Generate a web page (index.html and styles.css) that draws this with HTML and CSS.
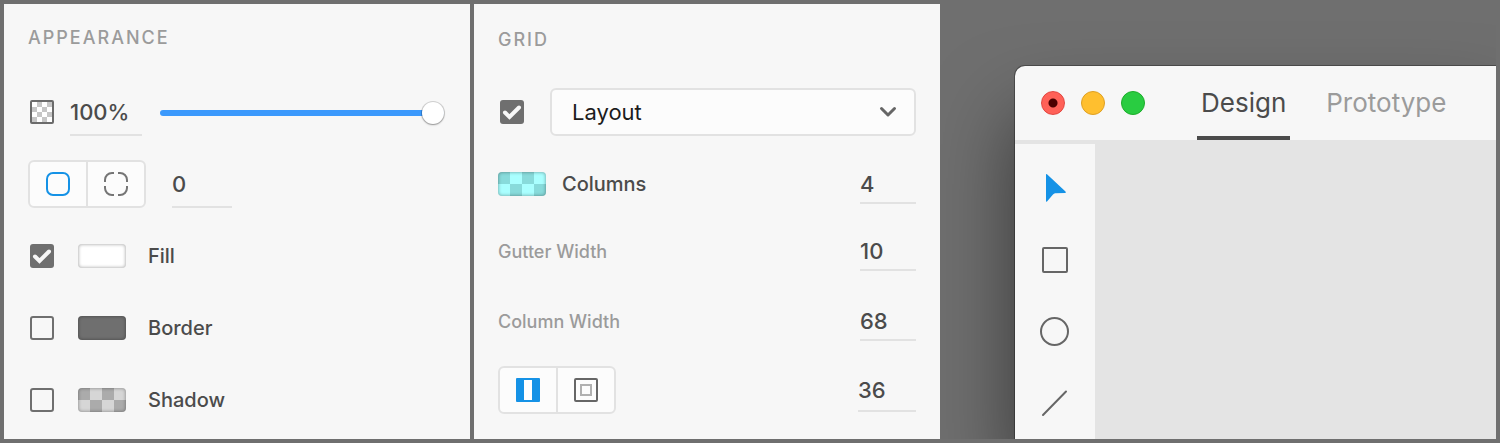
FILE: index.html
```html
<!DOCTYPE html>
<html lang="en">

<head>
    <meta charset="UTF-8">
    <meta name="viewport" content="width=device-width, initial-scale=1.0">
    <title>Design Tool Panels</title>
    <link rel="stylesheet" href="styles.css">
</head>

<body>
    <section class="panel">
        <h2>Appearance</h2>
        <div class="row">
            <svg class="opacity-icon" width="24" height="24" viewBox="0 0 24 24">
                <rect x="1" y="1" width="22" height="22" rx="1" fill="#fff" stroke="#6b6b6b" stroke-width="2" />
                <path fill="#c6c6c6" d="M7 2h5v5H7zM17 2h5v5h-5zM2 7h5v5H2zM12 7h5v5h-5zM7 12h5v5H7zM17 12h5v5h-5zM2 17h5v5H2zM12 17h5v5h-5z" />
            </svg>
            <input type="text" class="number opacity" value="100%" aria-label="Opacity">
            <input type="range" class="slider" min="0" max="100" value="100" aria-label="Opacity slider">
        </div>
        <div class="row">
            <div class="segment">
                <button type="button" aria-label="Same radius for all corners">
                    <svg width="24" height="24" viewBox="0 0 24 24" fill="none" stroke="#1592e6" stroke-width="2">
                        <rect x="1" y="1" width="22" height="22" rx="6" />
                    </svg>
                </button>
                <button type="button" aria-label="Different radius for each corner">
                    <svg width="24" height="24" viewBox="0 0 24 24" fill="none" stroke="#757575" stroke-width="2">
                        <path d="M1 10V8a7 7 0 0 1 7-7h2M14 1h2a7 7 0 0 1 7 7v2M23 14v2a7 7 0 0 1-7 7h-2M10 23H8a7 7 0 0 1-7-7v-2" />
                    </svg>
                </button>
            </div>
            <input type="text" class="number radius" value="0" aria-label="Corner radius">
        </div>
        <div class="row">
            <input type="checkbox" id="fill" checked>
            <span class="swatch swatch-white"></span>
            <label for="fill">Fill</label>
        </div>
        <div class="row">
            <input type="checkbox" id="border">
            <span class="swatch swatch-gray"></span>
            <label for="border">Border</label>
        </div>
        <div class="row">
            <input type="checkbox" id="shadow">
            <span class="swatch swatch-shadow"></span>
            <label for="shadow">Shadow</label>
        </div>
    </section>

    <section class="panel panel-grid">
        <h2>Grid</h2>
        <div class="row">
            <input type="checkbox" aria-label="Show grid" checked>
            <div class="select-box">
                <select aria-label="Grid type">
                    <option>Layout</option>
                    <option>Square</option>
                </select>
                <svg class="arrow" width="18" height="12" viewBox="0 0 18 12" fill="none" stroke="#666" stroke-width="3" stroke-linecap="round" stroke-linejoin="round">
                    <path d="M2.500 2.500L9 9l6.500-6.500" />
                </svg>
            </div>
        </div>
        <div class="fields">
            <div class="field">
                <span class="swatch swatch-aqua"></span>
                <label for="columns">Columns</label>
                <input type="text" class="number" id="columns" value="4">
            </div>
            <div class="field">
                <label class="muted" for="gutter">Gutter Width</label>
                <input type="text" class="number" id="gutter" value="10">
            </div>
            <div class="field">
                <label class="muted" for="column-width">Column Width</label>
                <input type="text" class="number" id="column-width" value="68">
            </div>
            <div class="field">
                <div class="segment">
                    <button type="button" aria-label="Linked margins">
                        <svg width="24" height="24" viewBox="0 0 24 24">
                            <rect width="24" height="24" rx="1" fill="#1592e6" />
                            <rect x="8" y="2" width="8" height="20" fill="#fff" />
                        </svg>
                    </button>
                    <button type="button" aria-label="Separate margins">
                        <svg width="24" height="24" viewBox="0 0 24 24" fill="none" stroke-width="2">
                            <rect x="1" y="1" width="22" height="22" rx="1" stroke="#666" />
                            <rect x="7" y="7" width="10" height="10" stroke="#b0b0b0" />
                        </svg>
                    </button>
                </div>
                <input type="text" class="number margin" value="36" aria-label="Margin">
            </div>
        </div>
    </section>

    <main class="stage">
        <div class="window">
            <header class="titlebar">
                <div class="lights">
                    <button type="button" class="light close" aria-label="Close"></button>
                    <button type="button" class="light minimize" aria-label="Minimize"></button>
                    <button type="button" class="light zoom" aria-label="Zoom"></button>
                </div>
                <nav class="tabs">
                    <a href="#design" class="active">Design</a>
                    <a href="#prototype">Prototype</a>
                </nav>
            </header>
            <div class="workspace">
                <div class="tools">
                    <button type="button" aria-label="Select">
                        <svg width="32" height="32" viewBox="0 0 32 32" fill="#1592e6">
                            <path d="M7 2.500Q7 1.500 8 2.300L26.500 19.500Q27.500 21 26 21L16 21.200Q15 21.500 14 22.500L8 29.500Q7 30.300 7 29z" />
                        </svg>
                    </button>
                    <button type="button" aria-label="Rectangle">
                        <svg width="32" height="32" viewBox="0 0 32 32" fill="none" stroke="#666" stroke-width="2">
                            <rect x="4" y="4" width="24" height="24" rx="1" />
                        </svg>
                    </button>
                    <button type="button" aria-label="Ellipse">
                        <svg width="32" height="32" viewBox="0 0 32 32" fill="none" stroke="#666" stroke-width="2">
                            <circle cx="15.500" cy="15.500" r="13.500" />
                        </svg>
                    </button>
                    <button type="button" aria-label="Line">
                        <svg width="32" height="32" viewBox="0 0 32 32" fill="none" stroke="#666" stroke-width="2" stroke-linecap="round">
                            <path d="M4 27L27 3.500" />
                        </svg>
                    </button>
                </div>
                <div class="canvas"></div>
            </div>
        </div>
    </main>
</body>

</html>
```
FILE: styles.css
```css
* {
    box-sizing: border-box;
}

body {
    display: grid;
    grid-template-columns: 466fr 470fr 556fr;
    min-height: 100vh;
    margin: 0;
    padding: 4px;
    background-color: #6f6f6f;
    font-family: Inter, "Liberation Sans", sans-serif;
    font-size: 20px;
    color: #4b4b4b;
}

input,
select,
button {
    margin: 0;
    padding: 0;
    border: none;
    font-family: inherit;
    color: inherit;
}

svg {
    display: block;
}

/* panels */
.panel {
    padding: 0 24px;
    background-color: #f7f7f7;
}

.panel-grid {
    border-left: 4px solid #6f6f6f;
}

h2 {
    height: 72px;
    margin: 0;
    font-size: 18px;
    font-weight: 500;
    line-height: 68px;
    letter-spacing: 2px;
    text-transform: uppercase;
    color: #9b9b9b;
}

.panel-grid h2 {
    line-height: 72px;
}

.row,
.field {
    display: flex;
    align-items: center;
}

.row {
    height: 72px;
}

label {
    font-weight: 500;
}

.row label {
    margin-left: 22px;
}

.number {
    width: 56px;
    height: 40px;
    padding-top: 2px;
    border-bottom: 2px solid #e2e2e2;
    background: none;
    font-size: 22px;
    font-weight: 500;
}

.opacity {
    width: 72px;
    height: 48px;
    margin: 0 18px 0 16px;
}

.radius {
    width: 60px;
    height: 48px;
    margin-left: 26px;
}

.opacity-icon {
    margin-left: 2px;
}

/* slider */
.slider {
    flex: 1;
    min-width: 0;
    height: 24px;
    margin: 2px 2px 0 0;
    appearance: none;
    background: none;
}

.slider::-webkit-slider-runnable-track {
    height: 6px;
    border-radius: 3px;
    background-color: #3b99fc;
}

.slider::-webkit-slider-thumb {
    width: 22px;
    height: 22px;
    margin-top: -8px;
    appearance: none;
    border-radius: 50%;
    background-color: #fff;
    box-shadow: 0 0 0 1px rgba(0, 0, 0, 0.15), 0 1px 2px rgba(0, 0, 0, 0.3);
}

/* checkbox */
input[type="checkbox"] {
    flex: none;
    width: 24px;
    height: 24px;
    margin: 0 24px 0 2px;
    appearance: none;
    border: 2px solid #6f6f6f;
    border-radius: 3px;
}

input[type="checkbox"]:checked {
    border: none;
    background: #6f6f6f url("data:image/svg+xml,%3Csvg xmlns='http://www.w3.org/2000/svg' viewBox='0 0 24 24'%3E%3Cpath d='M5 12.500l4.500 4.500L19 7.500' fill='none' stroke='%23f7f7f7' stroke-width='4' stroke-linecap='round'/%3E%3C/svg%3E");
}

/* color swatches */
.swatch {
    width: 48px;
    height: 24px;
    border-radius: 4px;
    box-shadow: inset 0 0 3px 1px rgba(0, 0, 0, 0.25);
}

.swatch-white {
    background-color: #fff;
}

.swatch-gray {
    background-color: #6f6f6f;
}

.swatch-shadow {
    background: repeating-conic-gradient(#d6d6d6 0 25%, #ababab 0 50%) 0 0 / 24px 24px;
}

.swatch-aqua {
    background: repeating-conic-gradient(#aff 0 25%, #88dbdb 0 50%) 0 0 / 24px 24px;
}

/* segmented buttons */
.segment {
    display: flex;
    width: 118px;
    height: 48px;
    border: 2px solid #e2e2e2;
    border-radius: 6px;
    background-color: #fcfcfc;
}

.segment button {
    display: flex;
    flex: 1;
    align-items: center;
    justify-content: center;
    background: none;
}

.segment button + button {
    border-left: 2px solid #e2e2e2;
}

/* drop-down */
.select-box {
    position: relative;
    flex: 1;
    margin-left: 2px;
}

.select-box select {
    width: 100%;
    height: 48px;
    padding: 0 20px;
    appearance: none;
    border: 2px solid #e2e2e2;
    border-radius: 6px;
    background-color: #fcfcfc;
    font-size: 22px;
    color: #1c1c1c;
}

.select-box .arrow {
    position: absolute;
    top: 18px;
    right: 19px;
    pointer-events: none;
}

.fields {
    display: grid;
    grid-template-rows: 72px 62px 78px 60px;
}

.field .number {
    margin-left: auto;
}

.field .swatch {
    margin-right: 16px;
}

.field .margin {
    width: 58px;
    height: 44px;
}

.muted {
    font-size: 18px;
    color: #9b9b9b;
}

/* app window */
.stage {
    display: flex;
    padding: 62px 0 0 75px;
    overflow: hidden;
}

.window {
    display: flex;
    flex: 1;
    flex-direction: column;
    border-top-left-radius: 10px;
    background-color: #f7f7f7;
    box-shadow: 0 0 0 1px rgba(0, 0, 0, 0.3), 0 50px 80px rgba(0, 0, 0, 0.5);
}

.titlebar {
    display: flex;
    height: 74px;
    padding-left: 26px;
}

.lights {
    display: flex;
    align-items: center;
    gap: 16px;
    margin-right: 52px;
}

.light {
    width: 24px;
    height: 24px;
    border: 1px solid;
    border-radius: 50%;
}

.close {
    border-color: #e24640;
    background: radial-gradient(circle, #4d0000 4px, #ff6158 5px);
}

.minimize {
    border-color: #dfa023;
    background-color: #ffbf2f;
}

.zoom {
    border-color: #1dad2b;
    background-color: #29cc41;
}

.tabs {
    display: flex;
    gap: 32px;
}

.tabs a {
    height: 74px;
    padding: 0 4px;
    border-bottom: 4px solid transparent;
    font-size: 26px;
    line-height: 74px;
    text-decoration: none;
    color: #9b9b9b;
}

.tabs .active {
    border-color: #4b4b4b;
    color: #4b4b4b;
}

.workspace {
    display: flex;
    flex: 1;
    border-top: 4px solid #e4e4e4;
}

.tools {
    display: flex;
    flex-direction: column;
    gap: 24px;
    width: 80px;
    padding-top: 20px;
}

.tools button {
    display: flex;
    align-items: center;
    justify-content: center;
    height: 48px;
    background: none;
}

.canvas {
    flex: 1;
    background-color: #e4e4e4;
}
```
